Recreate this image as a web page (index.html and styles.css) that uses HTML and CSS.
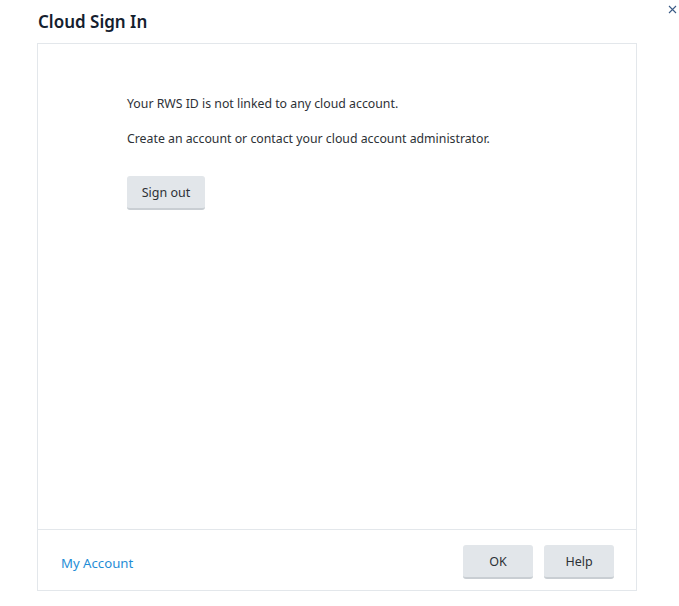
FILE: index.html
```html
<!DOCTYPE html>
<html>
<head>
<meta charset="utf-8">
<link rel="stylesheet" href="styles.css">
</head>
<body>
<div class="dialog">
  <button class="close" aria-label="Close">
    <svg width="9" height="9" viewBox="0 0 9 9"><path d="M1 1 L8 8 M8 1 L1 8" stroke="#3b5b86" stroke-width="1.1" fill="none"/></svg>
  </button>
  <h1 class="title">Cloud Sign In</h1>
  <div class="panel">
    <div class="content">
      <p class="msg">Your RWS ID is not linked to any cloud account.</p>
      <p class="msg">Create an account or contact your cloud account administrator.</p>
      <button class="btn signout">Sign out</button>
    </div>
    <div class="footer">
      <a class="link" href="#">My Account</a>
      <div class="actions">
        <button class="btn">OK</button>
        <button class="btn">Help</button>
      </div>
    </div>
  </div>
</div>
</body>
</html>
```
FILE: styles.css
```css
html, body {
  margin: 0;
  padding: 0;
  background: #ffffff;
}
body {
  font-family: "Noto Sans", "Open Sans", sans-serif;
  color: #2b2f33;
  width: 679px;
  height: 606px;
  overflow: hidden;
}
.dialog {
  position: relative;
  padding: 0 42px 0 37px;
}
.close {
  position: absolute;
  top: 2px;
  right: 1px;
  border: 0;
  background: transparent;
  padding: 0;
  width: 11px;
  height: 11px;
}
.title {
  margin: 0;
  padding: 9px 0 0 1px;
  height: 34px;
  font-size: 17px;
  font-weight: 600;
  color: #14202e;
  line-height: 26px;
}
.panel {
  width: 598px;
  height: 546px;
  border: 1px solid #e3e7eb;
  display: flex;
  flex-direction: column;
}
.content {
  flex: 1;
  padding: 51px 0 0 89px;
}
.msg {
  margin: 0 0 17px 0;
  font-size: 12.3px;
  line-height: 18px;
  color: #2d3136;
}
.btn {
  font-family: inherit;
  font-size: 12.5px;
  color: #2d3136;
  background: #e2e6ea;
  border: 0;
  border-bottom: 2px solid #c9ced3;
  border-radius: 3px;
  height: 34px;
  padding: 0;
  width: 70px;
}
.signout {
  margin-top: 11px;
  width: 78px;
}
.footer {
  border-top: 1px solid #e3e7eb;
  height: 60px;
  display: flex;
  align-items: center;
  justify-content: space-between;
  padding: 0 22px 0 23px;
}
.link {
  color: #1f8dd6;
  text-decoration: none;
  font-size: 13.2px;
  margin-top: 6px;
}
.actions {
  display: flex;
  gap: 11px;
  margin-top: 4px;
}
```
